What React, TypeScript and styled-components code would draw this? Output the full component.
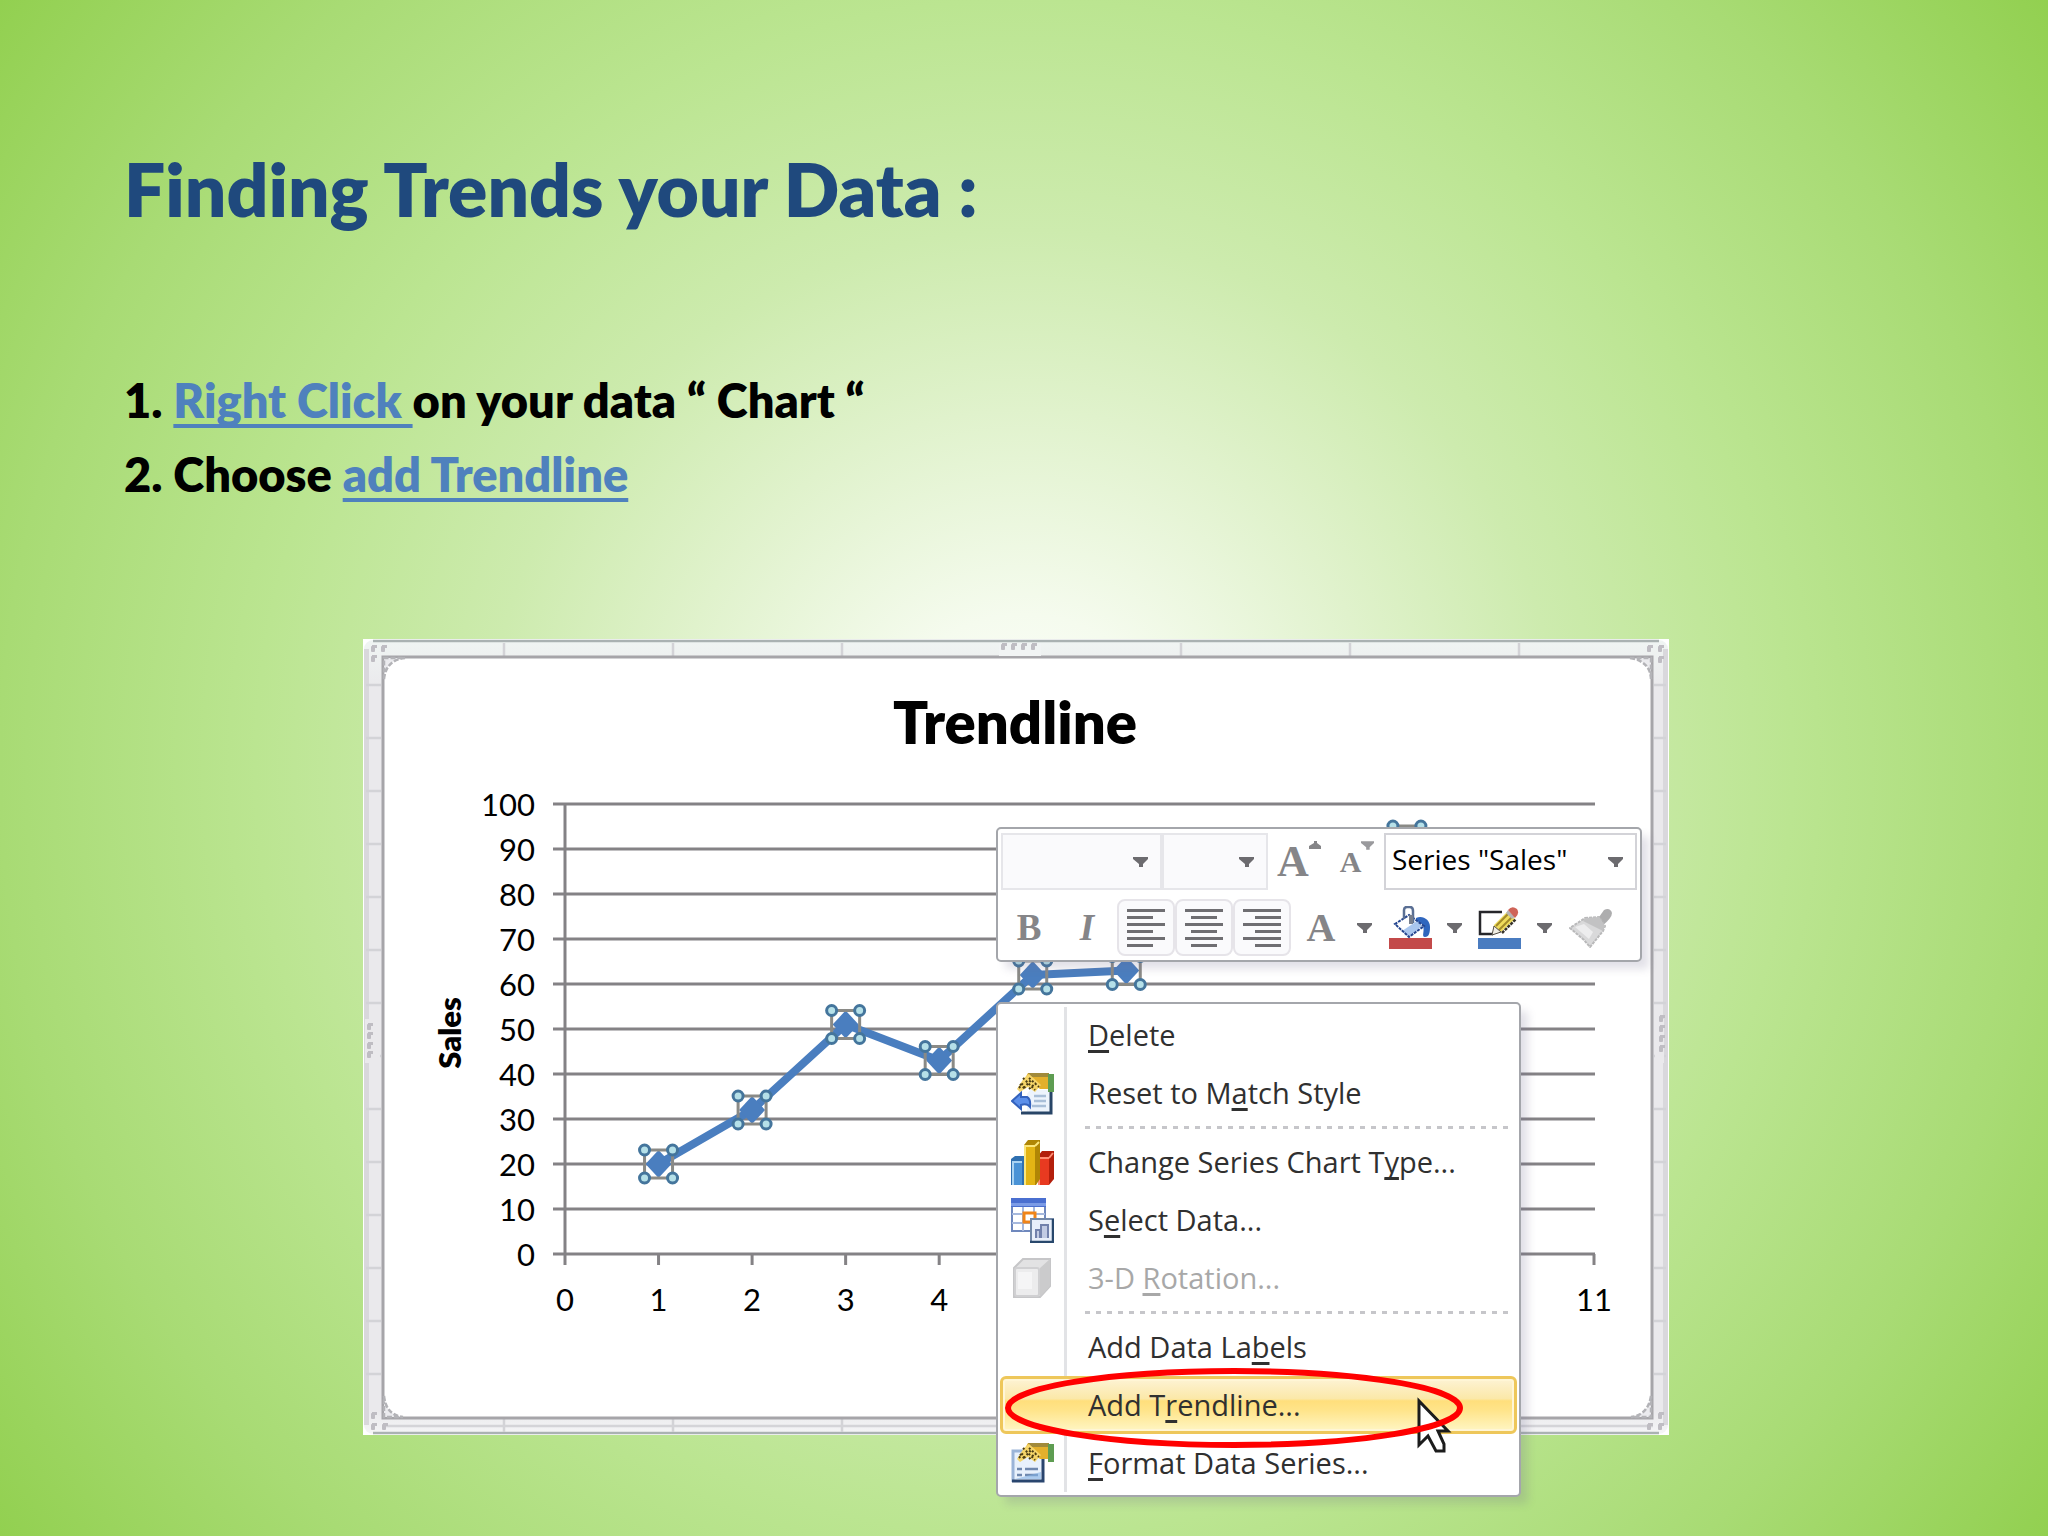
import React from "react";
import styled, { createGlobalStyle, css } from "styled-components";

const GlobalStyle = createGlobalStyle`
  *, *::before, *::after { box-sizing: border-box; }
  body { margin: 0; }
`;

const HEADING_FONT = `Lato, "Liberation Sans", sans-serif`;
const UI_FONT = `"Open Sans", "Noto Sans", sans-serif`;

const Slide = styled.main`
  min-height: 100vh;
  padding: 135px 112px 36px 96px;
  background: radial-gradient(
    circle farthest-corner at 50% 50%,
    #ffffff 0%,
    #f5fbee 12%,
    #e0f2cc 28%,
    #cdebae 42%,
    #bbe591 60%,
    #a8db74 80%,
    #92d050 100%
  );
  font-family: ${HEADING_FONT};
`;

const Title = styled.h1`
  margin: 0 28px;
  font-size: 73px;
  line-height: 108px;
  font-weight: 800;
  color: #1f497d;
`;

const Steps = styled.div`
  margin: 120px 28px 128px;
`;

const Step = styled.p`
  margin: 0;
  font-size: 47px;
  line-height: 74px;
  font-weight: 800;
  color: #000;
  white-space: pre-wrap;
`;

const StepLink = styled.a`
  color: #4f81bd;
  text-decoration: underline;
  text-decoration-thickness: 4px;
  text-underline-offset: 6px;
  text-decoration-skip-ink: none;
`;

const Figure = styled.figure`
  position: relative;
  width: 1306px;
  max-width: 100%;
  margin: 0 auto;
`;

const ChartSvg = styled.svg`
  display: block;
  width: 100%;
  height: auto;
  font-family: ${HEADING_FONT};
`;

const floating = css`
  position: absolute;
  background: #fff;
  border: 2px solid #a4a6ab;
  border-radius: 5px;
  box-shadow: 8px 8px 8px -1px rgba(110, 105, 140, 0.2);
  font-family: ${UI_FONT};
`;

const MiniToolbar = styled.div`
  ${floating}
  top: 188px;
  left: 633px;
  width: 646px;
  padding: 4px 3px;
  display: grid;
  gap: 9px;
`;

const ToolRow = styled.div`
  display: flex;
  align-items: center;
  height: 57px;
`;

const SelectBox = styled.label<{ $w: number; $active?: boolean }>`
  display: grid;
  grid-template-columns: 1fr 39px;
  align-items: center;
  width: ${(p) => p.$w}px;
  height: 57px;
  border: 2px solid ${(p) => (p.$active ? "#d3d3d8" : "#e6e6ea")};
  background: ${(p) => (p.$active ? "#fff" : "#fafafc")};
  svg { grid-area: 1 / 2; justify-self: center; pointer-events: none; }
`;

const Select = styled.select`
  grid-area: 1 / 1 / 2 / 3;
  appearance: none;
  width: 100%;
  height: 100%;
  padding: 0 0 6px 6px;
  border: 0;
  background: transparent;
  color: #000;
  font-family: ${UI_FONT};
  font-size: 28px;
`;

const ToolButton = styled.button<{ $w: number; $framed?: boolean }>`
  display: flex;
  align-items: center;
  justify-content: center;
  width: ${(p) => p.$w}px;
  height: 57px;
  padding: 0;
  border: 2px solid ${(p) => (p.$framed ? "#e6e4e9" : "transparent")};
  border-radius: 8px;
  background: ${(p) => (p.$framed ? "#fafafc" : "transparent")};
`;

const Letter = styled.span<{ $size: number; $bold?: boolean; $italic?: boolean }>`
  font-family: "Liberation Serif", "Times New Roman", serif;
  font-size: ${(p) => p.$size}px;
  line-height: 48px;
  font-weight: ${(p) => (p.$bold ? 700 : 400)};
  font-style: ${(p) => (p.$italic ? "italic" : "normal")};
  color: #858588;
`;

const LetterMark = styled.svg`
  align-self: flex-start;
  margin-top: 6px;
`;

const Menu = styled.div`
  ${floating}
  top: 363px;
  left: 633px;
  width: 525px;
  padding: 2px 2px 3px;
  background: linear-gradient(#e2e3e6, #e2e3e6) 66px 3px / 3px calc(100% - 6px) no-repeat #fff;
`;

const MenuItem = styled.button<{ $active?: boolean }>`
  display: grid;
  grid-template-columns: 85px 1fr;
  align-items: center;
  width: 100%;
  height: 58px;
  padding: 0;
  border: 3px solid transparent;
  border-radius: 6px;
  background: transparent;
  color: #303030;
  font-family: ${UI_FONT};
  font-size: 29px;
  line-height: 40px;
  text-align: left;
  white-space: nowrap;
  &:disabled { color: #a8a8a8; }
  svg { margin-left: 8px; }
  u { text-decoration-thickness: 3px; text-underline-offset: 4px; text-decoration-skip-ink: none; }
  ${(p) =>
    p.$active &&
    css`
      border-color: #eec75a;
      background: linear-gradient(#fdf3d4 0%, #fbe8a8 38%, #ffdf7c 42%, #ffe48a 60%, #fff6c4 100%);
      box-shadow: inset 0 0 0 2px #fff6d6;
    `}
`;

const Label = styled.span`
  grid-column: 2;
`;

const Separator = styled.hr`
  height: 3px;
  margin: 4px 3px 4px 85px;
  border: 0;
  background: repeating-linear-gradient(90deg, #c6c6ca 0 5px, transparent 5px 11px);
`;

const Callout = styled.svg`
  position: absolute;
  top: 726px;
  left: 639px;
  pointer-events: none;
`;

/* ---------- chart ---------- */

const X0 = 202;
const PLOT_WIDTH = 1029;
const X_MAX = 11;
const Y0 = 615;
const Y_UNIT = 45;
const px = (v: number) => X0 + (v * PLOT_WIDTH) / X_MAX;
const py = (v: number) => Y0 - (v * Y_UNIT) / 10;

const SALES: [number, number][] = [
  [1, 20],
  [2, 32],
  [3, 51],
  [4, 43],
  [5, 62],
  [6, 63],
];
const HANDLED: [number, number][] = [...SALES, [9, 92]];

const Handles = ({ x, y }: { x: number; y: number }) => (
  <g>
    <rect x={x - 14} y={y - 14} width="28" height="28" fill="none" stroke="#8a8a86" strokeWidth="3" />
    {[-14, 14].map((dx) =>
      [-14, 14].map((dy) => (
        <ellipse key={`${dx}${dy}`} cx={x + dx} cy={y + dy} rx="5" ry="5" fill="#b5e0e8" stroke="#44759c" strokeWidth="3" />
      ))
    )}
  </g>
);

const Dots = ({ at }: { at: [number, number][] }) => (
  <g fill="#bfbdc3">
    {at.map(([x, y]) => (
      <g key={`${x}-${y}`}>
        <rect x={x} y={y} width="4" height="6" rx="1" />
        <rect x={x + 1} y={y - 1} width="5" height="3" />
      </g>
    ))}
  </g>
);

const SalesChart = () => (
  <ChartSvg viewBox="0 0 1306 796" role="img" aria-label="Trendline">
    <defs>
      <linearGradient id="frame" x1="0" x2="0" y1="0" y2="1">
        <stop offset="0" stopColor="#f0f5f3" />
        <stop offset="0.06" stopColor="#eae9ec" />
        <stop offset="0.97" stopColor="#eae9ec" />
        <stop offset="1" stopColor="#f5f5f7" />
      </linearGradient>
    </defs>
    <rect width="1306" height="796" fill="#fff" />
    <rect x="1" y="1" width="1304" height="794" rx="9" fill="url(#frame)" />
    <rect x="1" y="10" width="5" height="776" fill="#d9d8dc" />
    <rect x="1300" y="10" width="5" height="776" fill="#d9d8dc" />
    <path d="M10 2H1296M10 794H1296" stroke="#aab2b2" strokeWidth="2.5" />
    <path d="M20 787H1290" stroke="#d4d4d8" strokeWidth="2.5" />
    <g stroke="#d3d3d7" strokeWidth="2.5">
      {[141, 310, 479, 818, 987, 1156].map((x) => (
        <path key={x} d={`M${x} 4V17M${x} 780V793`} />
      ))}
      {Array.from({ length: 14 }, (_, i) => 46 + i * 53).map((y) => (
        <path key={y} d={`M3 ${y}H18M1291 ${y}H1303`} />
      ))}
    </g>
    <rect x="20" y="18" width="1269" height="761" fill="#fff" stroke="#a6a5a9" strokeWidth="3" />
    <g fill="#ebebee" stroke="#b3b3b7" strokeWidth="2.5" strokeDasharray="5 2">
      <path d="M21 40Q23 21 42 19H21Z" />
      <path d="M1267 19Q1287 22 1288 40V19Z" />
      <path d="M21 757Q23 776 40 778H21Z" />
      <path d="M1288 757Q1285 776 1268 778H1288Z" />
    </g>
    <rect x="636" y="4" width="42" height="13" fill="#f1f4f4" />
    <rect x="2" y="380" width="15" height="44" fill="#eae9ec" />
    <rect x="1292" y="380" width="9" height="44" fill="#eae9ec" />
    <Dots at={[[638, 5], [648, 5], [658, 5], [668, 5]]} />
    <Dots at={[[4, 385], [4, 394], [4, 404], [4, 413]]} />
    <Dots at={[[1296, 377], [1296, 387], [1296, 397], [1296, 407]]} />
    <Dots at={[[8, 7], [18, 7], [8, 17], [1284, 7], [1295, 7], [1295, 18]]} />
    <Dots at={[[8, 785], [19, 785], [8, 774], [1284, 785], [1295, 785], [1295, 774]]} />

    <text x="652" y="105" fontSize="58" fontWeight="800" textAnchor="middle">
      Trendline
    </text>
    <text x="-394" y="98" fontSize="31" fontWeight="800" textAnchor="middle" transform="rotate(-90)">
      Sales
    </text>

    <g stroke="#848285" strokeWidth="3">
      {Array.from({ length: 11 }, (_, i) => i * 10).map((v) => (
        <path key={v} d={`M190 ${py(v)}H1232`} />
      ))}
      <path d={`M${X0} ${py(100)}V626`} />
      {[1, 2, 3, 4, 11].map((v) => (
        <path key={v} d={`M${px(v)} ${Y0}V626`} />
      ))}
    </g>
    <g fontSize="31" fill="#000">
      {Array.from({ length: 11 }, (_, i) => i * 10).map((v) => (
        <text key={v} x="172" y={py(v) + 12} textAnchor="end">
          {v}
        </text>
      ))}
      {[0, 1, 2, 3, 4, 11].map((v) => (
        <text key={v} x={px(v)} y="672" textAnchor="middle">
          {v}
        </text>
      ))}
    </g>

    <polyline
      points={SALES.map(([x, y]) => `${px(x)},${py(y)}`).join(" ")}
      fill="none"
      stroke="#4a7ebf"
      strokeWidth="8"
      strokeLinejoin="round"
    />
    {HANDLED.map(([x, v]) => (
      <g key={x}>
        <path d={`M${px(x)} ${py(v) - 14}l13 14l-13 14l-13 -14z`} fill="#4a7ebf" />
        <Handles x={px(x)} y={py(v)} />
      </g>
    ))}
  </ChartSvg>
);

/* ---------- icons ---------- */

const Caret = () => (
  <svg width="15" height="10" viewBox="0 0 15 10" aria-hidden="true">
    <path d="M0 0H15V2L10 7V10H6V7L0 2Z" fill="#6c6b6f" />
  </svg>
);

const AlignIcon = ({ side }: { side: "left" | "center" | "right" }) => (
  <svg width="38" height="42" viewBox="0 0 38 42" aria-hidden="true">
    {[0, 1, 2, 3, 4, 5].map((i) => {
      const w = i % 2 ? 26 : 38;
      const x = side === "left" ? 0 : side === "center" ? (38 - w) / 2 : 38 - w;
      return <rect key={i} x={x} y={2 + i * 7} width={w} height="3" fill="#6f6e72" />;
    })}
  </svg>
);

const BucketIcon = () => (
  <svg width="43" height="43" viewBox="0 0 43 43" aria-hidden="true">
    <rect y="32" width="43" height="11" fill="#c34a4a" />
    <path d="M27 12C34 9 41 14 41 21C41 27 40 31 36 31C32 31 36 25 34 20C33 17 30 16 27 17Z" fill="#2f66be" />
    <path d="M20 9L35 20L20 31L6 18Z" fill="#fff" />
    <path d="M33 20L20 31L13 25L28 15Z" fill="#a9c6ee" />
    <path d="M20 9L35 20L20 31L6 18Z" fill="none" stroke="#24458f" strokeWidth="2" strokeDasharray="3 1" />
    <path d="M15 13V4Q15 1 18 1H21Q24 1 24 5V17" fill="none" stroke="#5a6f94" strokeWidth="2.5" />
    <rect x="20" y="9" width="4" height="9" fill="#767d8b" />
  </svg>
);

const PencilIcon = () => (
  <svg width="43" height="43" viewBox="0 0 43 43" aria-hidden="true">
    <rect y="32" width="43" height="11" fill="#4a7cc0" />
    <path d="M24 6H2V28H15" fill="none" stroke="#26262a" strokeWidth="2.5" />
    <path d="M14 29L16 19L29 6L37 13L23 26Z" fill="#efdc5c" />
    <path d="M18 20L30 8M21 24L34 11" stroke="#a38b2a" strokeWidth="2" />
    <path d="M24 27L38 13" stroke="#37332a" strokeWidth="2.5" strokeDasharray="3 1" />
    <path d="M14 29L16 20L23 26Z" fill="#f1eee4" stroke="#55504a" />
    <path d="M28 7L30 4L37 11L34 13Z" fill="#b6b5b4" />
    <path d="M30 4Q34 -1 39 3Q42 8 37 12Z" fill="#cf6458" />
  </svg>
);

const BrushIcon = () => (
  <svg width="44" height="40" viewBox="0 0 44 40" aria-hidden="true">
    <path d="M28 12L35 2Q41 -1 43 5Q43 10 33 18Z" fill="#adadae" />
    <path d="M16 10L30 9L36 18L34 23L21 39L15 32L1 20Z" fill="#d9d9da" stroke="#b9b9ba" strokeWidth="2" strokeDasharray="3 1" />
    <path d="M16 10L30 9L36 18L34 23L14 13Z" fill="#c2c2c3" />
    <path d="M6 19L15 16L24 24L20 31Z" fill="#ededee" />
  </svg>
);

const PropertySheet = () => (
  <>
    <rect x="2" y="9" width="29" height="31" fill="#e8f1fc" />
    <path d="M2 40V9H31" fill="none" stroke="#9ab4d8" strokeWidth="3" />
    <path d="M1 39H32V16" fill="none" stroke="#29456e" strokeWidth="3" />
    <path d="M6 27H11M14 27H27M6 33H11M14 33H27" stroke="#6f88ae" strokeWidth="2.5" />
    <path d="M4 37H30V30Z" fill="#84b3e4" opacity="0.6" />
  </>
);

const PointingHand = () => (
  <>
    <path d="M17 1H38V17H29L24 13L12 10Z" fill="#e3b02c" />
    <path d="M17 1H38V5H20Z" fill="#a18a3a" />
    <rect x="37" y="2" width="6" height="18" fill="#5e9d52" />
    <path d="M6 17L13 6L18 2L30 13L24 20L17 15L9 20Z" fill="#f5d56a" />
    <path d="M8 16L13 10M13 16L20 8M18 17L25 11M12 6L24 18M9 12L14 17M18 6L28 15" stroke="#4a3c14" strokeWidth="2" strokeDasharray="2 2" />
  </>
);

const ResetIcon = () => (
  <svg width="43" height="43" viewBox="0 0 43 43" aria-hidden="true">
    <path d="M19 18H40V40H16V22Z" fill="#edf4fc" />
    <path d="M10 41H40V18" fill="none" stroke="#284567" strokeWidth="3" />
    <path d="M23 24H35M23 29H35M21 34H35" stroke="#a9bfd8" strokeWidth="2.5" />
    <PointingHand />
    <path d="M1 29L10 21V25H16Q20 27 19 35Q16 31 10 33V37Z" fill="#5b8fea" stroke="#3362bd" strokeWidth="2" />
  </svg>
);

const FormatIcon = () => (
  <svg width="43" height="43" viewBox="0 0 43 43" aria-hidden="true">
    <PropertySheet />
    <PointingHand />
  </svg>
);

const ColumnsIcon = () => (
  <svg width="43" height="45" viewBox="0 0 43 45" aria-hidden="true">
    <path d="M0 19L4 16H14V45H0Z" fill="#2f70b0" />
    <path d="M1 22H11V45H1Z" fill="#4a93d6" />
    <path d="M2 45V22H11" fill="none" stroke="#a9d3f2" strokeWidth="2" />
    <path d="M27 16L31 11H43V39L38 45H27Z" fill="#b31f0c" />
    <path d="M27 18H38V45H27Z" fill="#e83a20" />
    <path d="M28 45V18H38M38 18L42 13" fill="none" stroke="#ff8d74" strokeWidth="2" />
    <path d="M13 5L17 0H29V39L25 45H13Z" fill="#b08605" />
    <path d="M13 6H24V45H13Z" fill="#e3b414" />
    <path d="M14 45V6H24M24 6L28 2" fill="none" stroke="#fbe67c" strokeWidth="2" />
  </svg>
);

const SelectDataIcon = () => (
  <svg width="43" height="45" viewBox="0 0 43 45" aria-hidden="true">
    <rect x="1" y="1" width="33" height="32" fill="#fff" stroke="#6f88bd" strokeWidth="2" />
    <rect width="35" height="9" fill="#4a6fd0" />
    <rect y="5" width="35" height="3" fill="#7b9be6" />
    <path d="M12 9V33M23 9V33M1 16H34M1 25H34" stroke="#a6b8dc" strokeWidth="2" />
    <rect x="13" y="15" width="11" height="9" fill="#fff" stroke="#f08418" strokeWidth="3" />
    <rect x="20" y="21" width="22" height="23" fill="#e9effa" stroke="#7388a8" strokeWidth="2" />
    <path d="M19 44H42V21" fill="none" stroke="#28486c" strokeWidth="2.5" />
    <path d="M25 40V32H29V40M30 40V27H37V40" fill="#c2cbe4" stroke="#7281ac" strokeWidth="2" />
  </svg>
);

const CubeIcon = () => (
  <svg width="43" height="41" viewBox="0 0 43 41" aria-hidden="true">
    <path d="M3 10L12 1H39V28L29 39H3Z" fill="#e2e2e3" stroke="#c6c6c8" strokeWidth="2" />
    <path d="M29 10L39 1V28L29 39Z" fill="#cbcbcc" />
    <rect x="4" y="10" width="24" height="28" rx="2" fill="#ececed" stroke="#d0d0d2" strokeWidth="2" />
    <rect x="7" y="14" width="14" height="17" fill="#f5f5f6" />
  </svg>
);

/* ---------- page ---------- */

const Toolbar = () => (
  <MiniToolbar role="toolbar" aria-label="Formatting">
    <ToolRow>
      <SelectBox $w={161}>
        <Select aria-label="Font" />
        <Caret />
      </SelectBox>
      <SelectBox $w={106}>
        <Select aria-label="Font size" />
        <Caret />
      </SelectBox>
      <ToolButton $w={62} aria-label="Grow font">
        <Letter $size={44} $bold>A</Letter>
        <LetterMark width="12" height="8" viewBox="0 0 12 8">
          <path d="M0 8V5L5 2V0H8V2L12 5V8Z" fill="#858588" />
        </LetterMark>
      </ToolButton>
      <ToolButton $w={54} aria-label="Shrink font">
        <Letter $size={30} $bold>A</Letter>
        <LetterMark width="13" height="9" viewBox="0 0 15 10">
          <path d="M0 0H15V2L10 7V10H6V7L0 2Z" fill="#9a9a9d" />
        </LetterMark>
      </ToolButton>
      <SelectBox $w={253} $active>
        <Select aria-label="Chart element" defaultValue="sales">
          <option value="sales">Series "Sales"</option>
        </Select>
        <Caret />
      </SelectBox>
    </ToolRow>
    <ToolRow>
      <ToolButton $w={56} aria-label="Bold">
        <Letter $size={37} $bold>B</Letter>
      </ToolButton>
      <ToolButton $w={60} aria-label="Italic">
        <Letter $size={37} $bold $italic>I</Letter>
      </ToolButton>
      <ToolButton $w={58} $framed aria-label="Align left">
        <AlignIcon side="left" />
      </ToolButton>
      <ToolButton $w={58} $framed aria-label="Center">
        <AlignIcon side="center" />
      </ToolButton>
      <ToolButton $w={58} $framed aria-label="Align right">
        <AlignIcon side="right" />
      </ToolButton>
      <ToolButton $w={60} aria-label="Font color">
        <Letter $size={40} $bold>A</Letter>
      </ToolButton>
      <ToolButton $w={26} aria-label="Font color options">
        <Caret />
      </ToolButton>
      <ToolButton $w={66} aria-label="Shape fill">
        <BucketIcon />
      </ToolButton>
      <ToolButton $w={22} aria-label="Shape fill options">
        <Caret />
      </ToolButton>
      <ToolButton $w={68} aria-label="Shape outline">
        <PencilIcon />
      </ToolButton>
      <ToolButton $w={22} aria-label="Shape outline options">
        <Caret />
      </ToolButton>
      <ToolButton $w={72} aria-label="Format painter">
        <BrushIcon />
      </ToolButton>
    </ToolRow>
  </MiniToolbar>
);

const ContextMenu = () => (
  <Menu role="menu">
    <MenuItem role="menuitem">
      <Label><u>D</u>elete</Label>
    </MenuItem>
    <MenuItem role="menuitem">
      <ResetIcon />
      <Label>Reset to M<u>a</u>tch Style</Label>
    </MenuItem>
    <Separator />
    <MenuItem role="menuitem">
      <ColumnsIcon />
      <Label>Change Series Chart T<u>y</u>pe...</Label>
    </MenuItem>
    <MenuItem role="menuitem">
      <SelectDataIcon />
      <Label>S<u>e</u>lect Data...</Label>
    </MenuItem>
    <MenuItem role="menuitem" disabled>
      <CubeIcon />
      <Label>3-D <u>R</u>otation...</Label>
    </MenuItem>
    <Separator />
    <MenuItem role="menuitem">
      <Label>Add Data La<u>b</u>els</Label>
    </MenuItem>
    <MenuItem role="menuitem" $active>
      <Label>Add T<u>r</u>endline...</Label>
    </MenuItem>
    <MenuItem role="menuitem">
      <FormatIcon />
      <Label><u>F</u>ormat Data Series...</Label>
    </MenuItem>
  </Menu>
);

export default function App() {
  return (
    <>
      <GlobalStyle />
      <Slide>
        <Title>Finding Trends your Data :</Title>
        <Steps>
          <Step>
            1. <StepLink href="#chart">Right Click </StepLink>on your data “ Chart “
          </Step>
          <Step>
            2. Choose <StepLink href="#chart">add Trendline</StepLink>
          </Step>
        </Steps>
        <Figure id="chart">
          <SalesChart />
          <Toolbar />
          <ContextMenu />
          <Callout width="466" height="88" viewBox="0 0 466 88" aria-hidden="true">
            <path
              d="M417 36V80L426 71L434 86H442V79L436 66H446Z"
              fill="#fff"
              stroke="#1c1c1c"
              strokeWidth="3"
            />
            <ellipse cx="232" cy="43" rx="226" ry="37" fill="none" stroke="#ff0000" strokeWidth="6" />
          </Callout>
        </Figure>
      </Slide>
    </>
  );
}
